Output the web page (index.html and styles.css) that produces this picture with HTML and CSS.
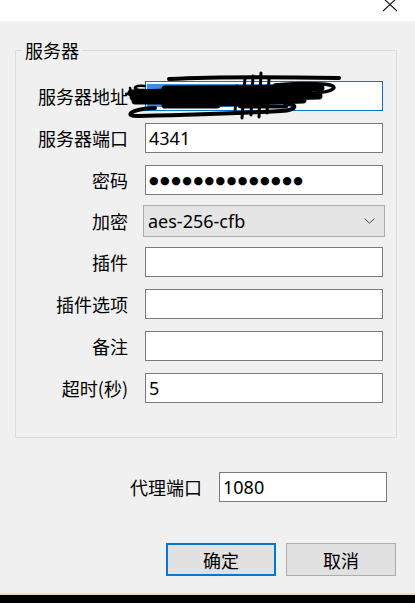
FILE: index.html
```html
<!DOCTYPE html>
<html lang="zh-CN">
<head>
<meta charset="utf-8">
<title>编辑服务器</title>
<link rel="stylesheet" href="styles.css">
</head>
<body>
  <div class="titlebar">
    <svg class="close" width="14" height="21" viewBox="0 0 14 21"><path d="M0,-2 L14,11 M14,-2 L0,11" stroke="#111" stroke-width="1.1" fill="none"/></svg>
  </div>

  <fieldset class="group">
    <legend class="group-title">服务器</legend>
    <div class="form">
      <label class="lbl">服务器地址</label>
      <input class="field focus" type="text" value="">
      <label class="lbl">服务器端口</label>
      <input class="field" type="text" value="4341">
      <label class="lbl">密码</label>
      <div class="field pw">●●●●●●●●●●●●●●</div>
      <label class="lbl">加密</label>
      <div class="select">
        <span>aes-256-cfb</span>
        <svg width="11" height="6" viewBox="0 0 11 6"><path d="M0.5,0.5 L5.5,5.2 L10.5,0.5" stroke="#444" stroke-width="1" fill="none"/></svg>
      </div>
      <label class="lbl">插件</label>
      <input class="field" type="text" value="">
      <label class="lbl">插件选项</label>
      <input class="field" type="text" value="">
      <label class="lbl">备注</label>
      <input class="field" type="text" value="">
      <label class="lbl">超时(秒)</label>
      <input class="field" type="text" value="5">
    </div>
  </fieldset>

  <div class="proxy">
    <label class="lbl">代理端口</label>
    <input class="field proxy-field" type="text" value="1080">
  </div>

  <div class="buttons">
    <button class="btn primary">确定</button>
    <button class="btn">取消</button>
  </div>

  <div class="spacer"></div>
  <div class="taskbar"></div>

  <svg class="scribble" width="230" height="56" viewBox="0 0 230 56">
    <rect x="22" y="14" width="136" height="23" fill="#3a8ee6"/>
    <g stroke="#000" fill="none" stroke-linecap="round" stroke-linejoin="round">
      <path d="M44,9 C100,6 160,7 214,8" stroke-width="4"/>
      <path d="M40,19 L196,18 L6,23 L184,22 L8,27 L194,26 L10,31 L178,30 L40,35 L92,35 M116,35 L160,35" stroke-width="7"/>
      <path d="M150,15 C192,12 214,14 208,19 C202,24 175,24 150,24" stroke-width="3.5"/>
      <path d="M30,38 C3,39 -1,47 14,46 C60,45 120,43 156,41 C173,40 173,34 160,34" stroke-width="4"/>
      <path d="M0,24 L20,23 M5,18 L8,31 M20,16 C8,14 5,21 20,20" stroke-width="2.5"/>
      <path d="M120,8 L117,48 M128,6 L126,45 M136,3 L134,47 M144,9 L142,43 M112,16 L110,42" stroke-width="3"/>
    </g>
  </svg>
</body>
</html>
```
FILE: styles.css
```css
html, body {
  margin: 0;
  padding: 0;
}

body {
  position: relative;
  width: 415px;
  height: 603px;
  overflow: hidden;
  background: #f0f0f0;
  display: flex;
  flex-direction: column;
  font-family: "Noto Sans CJK SC", "Noto Sans", sans-serif;
  font-size: 18px;
  color: #000;
}

.titlebar {
  position: relative;
  height: 21px;
  background: #fff;
  flex: none;
}

.close {
  position: absolute;
  right: 18px;
  top: 0;
}

.group {
  flex: none;
  margin: 19px 18px 0 15px;
  padding: 21px 13px 34px 0;
  border: 1px solid #dcdcdc;
  min-width: 0;
}

.group-title {
  margin-left: 6px;
  padding: 0 3px;
  line-height: 20px;
  font-size: 18px;
}

.form {
  display: grid;
  grid-template-columns: 112px 238px;
  column-gap: 17px;
  row-gap: 12px;
  align-items: center;
}

.lbl {
  display: flex;
  justify-content: flex-end;
  align-items: center;
  line-height: 20px;
  white-space: nowrap;
}

.field {
  box-sizing: border-box;
  height: 30px;
  width: 100%;
  margin: 0;
  padding: 0 3px;
  border: 1px solid #7a7a7a;
  background: #fff;
  font-family: "Noto Sans", "Noto Sans CJK SC", sans-serif;
  font-size: 18px;
  color: #000;
  outline: none;
}

.field.focus {
  border-color: #0078d7;
}

.pw {
  display: flex;
  align-items: center;
  font-family: "DejaVu Sans", sans-serif;
  font-size: 11px;
  letter-spacing: 1.5px;
  padding-left: 3px;
  overflow: hidden;
  white-space: nowrap;
}

.select {
  box-sizing: border-box;
  height: 32px;
  margin: -2px;
  display: flex;
  align-items: center;
  justify-content: space-between;
  padding: 0 9px 0 4px;
  background: #e5e5e5;
  border: 1px solid #acacac;
  font-family: "Noto Sans", "Noto Sans CJK SC", sans-serif;
}

.proxy {
  flex: none;
  margin-top: 34px;
  display: flex;
  justify-content: flex-end;
  align-items: center;
  gap: 17px;
  padding-right: 28px;
}

.proxy-field {
  width: 168px;
}

.buttons {
  flex: none;
  margin-top: 41px;
  display: flex;
  justify-content: flex-end;
  gap: 10px;
  padding-right: 19px;
}

.btn {
  box-sizing: border-box;
  width: 110px;
  height: 33px;
  margin: 0;
  padding: 0;
  background: #e1e1e1;
  border: 1px solid #adadad;
  font-family: "Noto Sans CJK SC", sans-serif;
  font-size: 18px;
  color: #000;
}

.btn.primary {
  border: 2px solid #0078d7;
}

.spacer {
  flex: 1;
}

.taskbar {
  flex: none;
  height: 8px;
  background: #000;
  border-top: 2px solid #e6dfbd;
}

.scribble {
  position: absolute;
  left: 125px;
  top: 70px;
}
```
